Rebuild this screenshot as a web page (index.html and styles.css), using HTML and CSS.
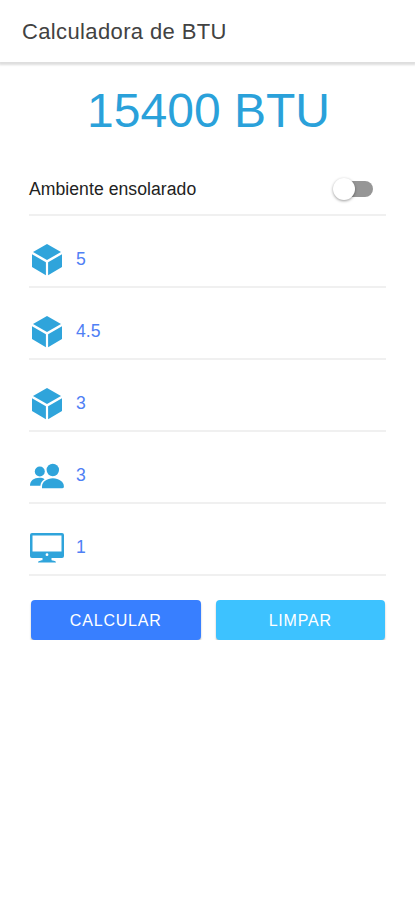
FILE: index.html
```html
<!DOCTYPE html>
<html lang="pt-BR">
<head>
	<meta charset="UTF-8">
	<meta name="viewport" content="width=device-width, initial-scale=1.0">
	<title>Calculadora de BTU</title>
	<link rel="stylesheet" href="styles.css">
</head>
<body>
	<svg class="sprite">
		<symbol id="cube" viewBox="0 0 34 34">
			<path d="M17 1L31 9 17 17 3 9zM2 11.3L15.9 19.3V32.3L2 24zM32 11.3L18.1 19.3V32.3L32 24z"/>
		</symbol>
		<symbol id="people" viewBox="0 0 34 34">
			<circle cx="9.8" cy="12.5" r="5"/>
			<circle cx="22.8" cy="11" r="6.2"/>
			<path d="M0 26.7C0 21.8 4 18.8 9.4 18.8c2.2 0 3.8.5 5.2 1.4-2.5 1.6-4 3.7-4.2 6.5z"/>
			<path d="M12 29.2v-1.7c0-4.700 4.800-8.300 10.900-8.300s11 3.600 11 8.300c0 1.200-.5 1.700-1.500 1.700z"/>
		</symbol>
		<symbol id="monitor" viewBox="0 0 34 34">
			<path fill-rule="evenodd" d="M2 2h30a2 2 0 0 1 2 2V25a2 2 0 0 1-2 2H21.500v2c0 .8 4.500.4 4.500 2.500H8c0-2.100 4.500-1.700 4.500-2.500V27H2a2 2 0 0 1-2-2V4a2 2 0 0 1 2-2zM2.500 4.500v16h29V4.500zM17 22.300a1.400 1.400 0 1 0 0 2.800 1.400 1.400 0 0 0 0-2.800z"/>
		</symbol>
	</svg>

	<header>
		<h1>Calculadora de BTU</h1>
	</header>

	<main>
		<h2>15400 BTU</h2>
		<label class="item sun">
			Ambiente ensolarado
			<span class="toggle"></span>
		</label>
		<div class="item"><svg class="icon"><use href="#cube"/></svg><span>5</span></div>
		<div class="item"><svg class="icon"><use href="#cube"/></svg><span>4.5</span></div>
		<div class="item"><svg class="icon"><use href="#cube"/></svg><span>3</span></div>
		<div class="item"><svg class="icon"><use href="#people"/></svg><span>3</span></div>
		<div class="item"><svg class="icon"><use href="#monitor"/></svg><span>1</span></div>
		<div class="buttons">
			<button class="primary">CALCULAR</button>
			<button class="secondary">LIMPAR</button>
		</div>
	</main>
</body>
</html>
```
FILE: styles.css
```css
body {
	font-family: "Liberation Sans", Arial, sans-serif;
	background-color: #fff;
	color: #222;
	margin: 0;
}

.sprite {
	display: none;
}

header {
	box-sizing: border-box;
	height: 62px;
	padding: 2px 0 0 22px;
	display: flex;
	align-items: center;
	box-shadow: 0 2px 2px 1px #dedede;
}

h1 {
	margin: 0;
	font-size: 22px;
	font-weight: normal;
	letter-spacing: 0.37px;
	color: #424242;
}

main {
	padding: 0 29px;
}

h2 {
	margin: 0;
	padding: 21px 0 0 2px;
	height: 80px;
	line-height: 55px;
	font-size: 48px;
	font-weight: normal;
	text-align: center;
	color: #2aa1da;
}

.item {
	box-sizing: border-box;
	height: 72px;
	padding: 26px 0 8px;
	display: flex;
	align-items: center;
	border-bottom: 2px solid #f0f0f0;
	font-size: 17.6px;
	color: #4f80f5;
}

.item span {
	padding-bottom: 1px;
}

.sun {
	height: 53px;
	padding: 1px 13px 0 0;
	justify-content: space-between;
	letter-spacing: 0.05px;
	color: #222;
}

.icon {
	width: 34px;
	height: 34px;
	margin: 0 12px 0 1px;
	fill: #2fa4db;
}

.toggle {
	position: relative;
	width: 38px;
	height: 15px;
	border-radius: 8px;
	background-color: #969696;
}

.toggle::before {
	content: "";
	position: absolute;
	left: -2px;
	top: -3px;
	width: 22px;
	height: 22px;
	border-radius: 50%;
	background-color: #fff;
	box-shadow: 0 1px 3px rgba(0, 0, 0, 0.4);
}

.buttons {
	display: flex;
	gap: 15px;
	padding: 24px 1px 0 2px;
}

button {
	flex: 1;
	height: 40px;
	padding: 1px 0 0;
	border: none;
	border-radius: 4px;
	font-family: inherit;
	font-size: 16px;
	letter-spacing: 0.8px;
	color: #fff;
	box-shadow: 0 2px 2px rgba(0, 0, 0, 0.25);
}

.primary {
	background-color: #387fff;
}

.secondary {
	background-color: #3dc2ff;
}
```
